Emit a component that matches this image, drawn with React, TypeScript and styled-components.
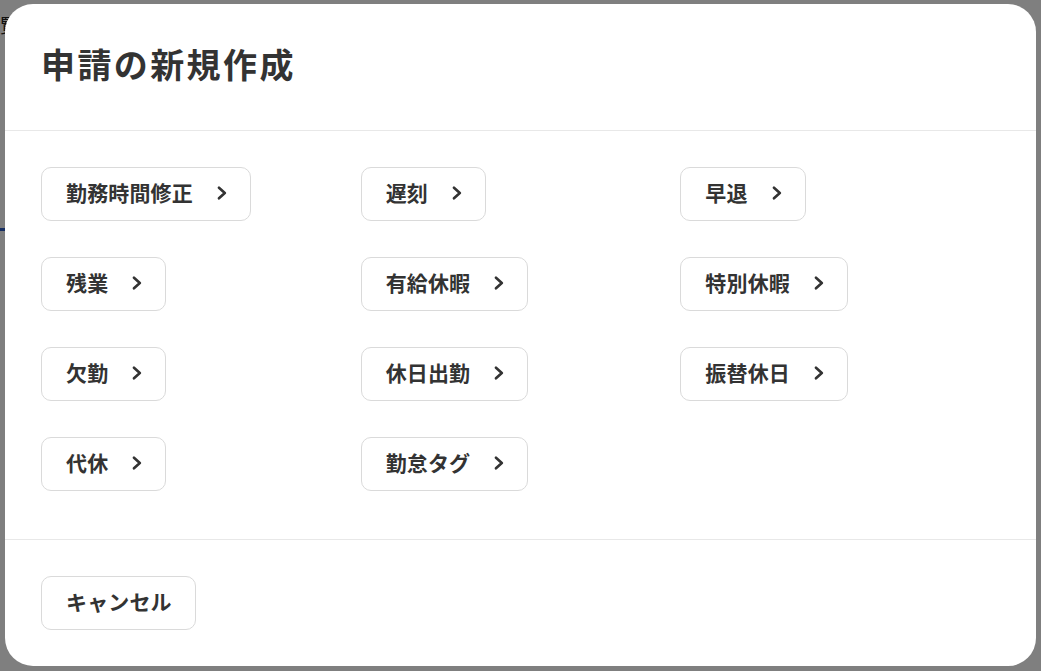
import React from "react";
import styled, { createGlobalStyle } from "styled-components";

const GlobalStyle = createGlobalStyle`
  html, body {
    margin: 0;
    padding: 0;
  }
  body {
    font-family: "Noto Sans CJK JP", "Noto Sans", sans-serif;
    color: #333;
  }
`;

const requestTypes = [
  "勤務時間修正",
  "遅刻",
  "早退",
  "残業",
  "有給休暇",
  "特別休暇",
  "欠勤",
  "休日出勤",
  "振替休日",
  "代休",
  "勤怠タグ",
];

function ChevronIcon() {
  return (
    <svg width="10" height="14" viewBox="0 0 10 14" fill="none">
      <path
        d="M2 1.7 L7.8 7 L2 12.3"
        stroke="currentColor"
        strokeWidth="2.6"
        strokeLinecap="round"
        strokeLinejoin="round"
      />
    </svg>
  );
}

function App() {
  return (
    <>
      <GlobalStyle />
      <Page>
        {/* 背面の一覧画面（モーダルで隠れている） */}
        <PageHeading>覧</PageHeading>
        <PageTabs>
          <TabLine />
        </PageTabs>

        <Backdrop>
          <Modal>
            <ModalHeader>
              <Title>申請の新規作成</Title>
            </ModalHeader>

            <ModalBody>
              {requestTypes.map((label) => (
                <TypeButton key={label}>
                  <span>{label}</span>
                  <ChevronIcon />
                </TypeButton>
              ))}
            </ModalBody>

            <ModalFooter>
              <CancelButton>キャンセル</CancelButton>
            </ModalFooter>
          </Modal>
        </Backdrop>
      </Page>
    </>
  );
}
export default App;

const Page = styled.div`
  position: relative;
  width: 1041px;
  height: 671px;
  overflow: hidden;
  background: #fff;
`;

const PageHeading = styled.div`
  padding-top: 12px;
  font-size: 19px;
  line-height: 26px;
  color: #222;
`;

const PageTabs = styled.div`
  margin-top: 190px;
`;

const TabLine = styled.div`
  width: 140px;
  height: 3px;
  background: #2c5cc5;
`;

const Backdrop = styled.div`
  position: absolute;
  inset: 0;
  display: flex;
  padding: 4px 5px 5px 5px;
  background: rgba(0, 0, 0, 0.5);
`;

const Modal = styled.div`
  flex: 1;
  display: flex;
  flex-direction: column;
  background: #fff;
  border-radius: 28px;
  overflow: hidden;
`;

const ModalHeader = styled.div`
  box-sizing: border-box;
  height: 127px;
  display: flex;
  align-items: center;
  padding: 0 36px 8px;
  border-bottom: 1px solid #e8e8e8;
`;

const Title = styled.h2`
  margin: 0;
  font-size: 34px;
  font-weight: 700;
  letter-spacing: 2.4px;
  color: #333;
`;

const ModalBody = styled.div`
  display: grid;
  grid-template-columns: repeat(3, 1fr);
  grid-auto-rows: 54px;
  row-gap: 36px;
  justify-items: start;
  padding: 36px 36px 48px;
`;

const ButtonBase = styled.button`
  box-sizing: border-box;
  height: 54px;
  display: inline-flex;
  align-items: center;
  background: #fff;
  border: 1px solid #dadada;
  border-radius: 10px;
  font-family: inherit;
  font-size: 21px;
  font-weight: 700;
  letter-spacing: 0.15px;
  line-height: 1;
  color: #333;
  cursor: pointer;
`;

const TypeButton = styled(ButtonBase)`
  gap: 24px;
  padding: 0 23px 3px 24px;
`;

const ModalFooter = styled.div`
  display: flex;
  padding: 36px;
  border-top: 1px solid #e8e8e8;
`;

const CancelButton = styled(ButtonBase)`
  padding: 0 23px 3px 24px;
`;
